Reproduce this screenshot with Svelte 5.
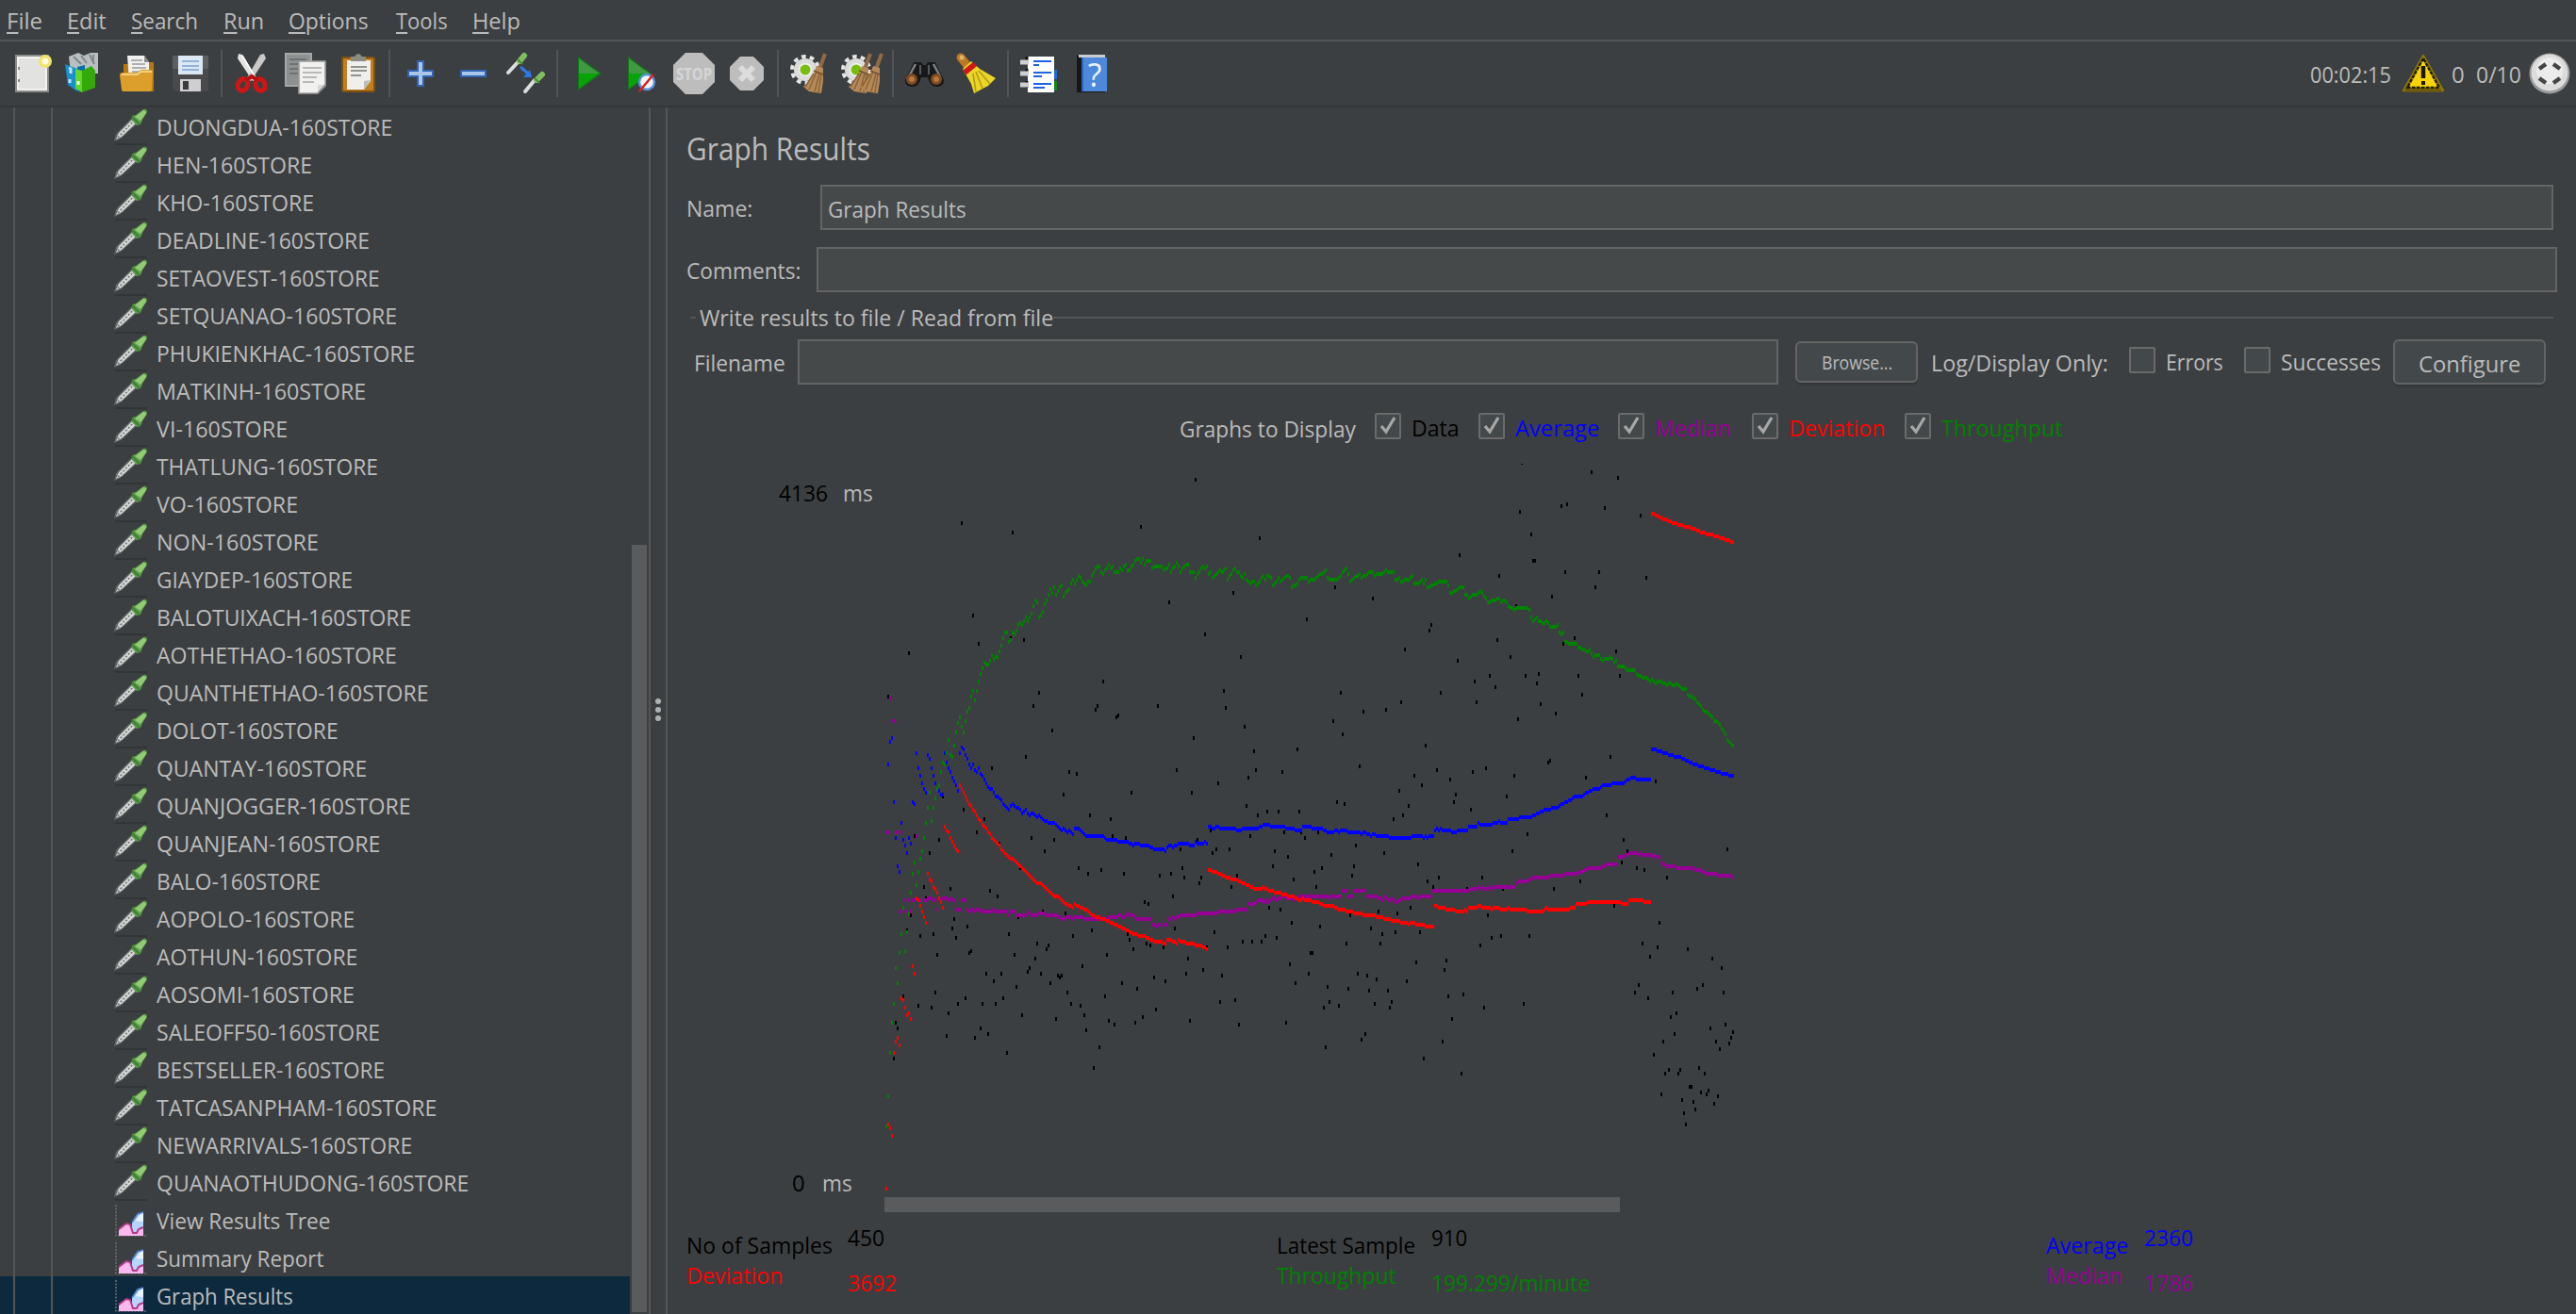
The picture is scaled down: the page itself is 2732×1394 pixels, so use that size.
<script lang="ts">
  // Squeezes a text run horizontally so that it takes exactly `width` pixels.
  function fit(node: HTMLElement, width: number) {
    const natural = node.offsetWidth;
    if (!natural) return;
    node.style.transform = `translateX(1px) scaleX(${(width - 1) / natural})`;
    node.style.marginRight = `${width - natural}px`;
  }

  const menus: [string, number][] = [
    ['File', 39], ['Edit', 43], ['Search', 72], ['Run', 44], ['Options', 86], ['Tools', 56], ['Help', 52],
  ];

  const toolbar = [
    'new', 'templates', 'open', 'save', '|', 'cut', 'copy', 'paste', '|', 'plus', 'minus', 'toggle', '|',
    'play', 'playnow', 'stop', 'shutdown', '|', 'clear', 'clearall', '|', 'find', 'broom', '|', 'functions', 'help',
  ];

  const samplers: [string, number][] = [
    ['DUONGDUA', 251], ['HEN', 166], ['KHO', 168], ['DEADLINE', 227], ['SETAOVEST', 238], ['SETQUANAO', 256],
    ['PHUKIENKHAC', 275], ['MATKINH', 223], ['VI', 140], ['THATLUNG', 236], ['VO', 151], ['NON', 173],
    ['GIAYDEP', 209], ['BALOTUIXACH', 271], ['AOTHETHAO', 256], ['QUANTHETHAO', 290], ['DOLOT', 194],
    ['QUANTAY', 224], ['QUANJOGGER', 271], ['QUANJEAN', 239], ['BALO', 175], ['AOPOLO', 211], ['AOTHUN', 214],
    ['AOSOMI', 211], ['SALEOFF50', 238], ['BESTSELLER', 243], ['TATCASANPHAM', 298], ['NEWARRIVALS', 272],
    ['QUANAOTHUDONG', 332],
  ];
  const listeners: [string, number][] = [['View Results Tree', 185], ['Summary Report', 179], ['Graph Results', 146]];

  const graphs: [string, number, string, number][] = [
    ['Data', 52, 'k', 110], ['Average', 90, 'b', 148], ['Median', 82, 'm', 142],
    ['Deviation', 103, 'r', 162], ['Throughput', 130, 'g', 170],
  ];

  const stats = [
    { id: 'a', labels: [['No of Samples', 156, 'k'], ['Deviation', 103, 'r']], values: [['450', 40, 'k'], ['3692', 53, 'r']] },
    { id: 'b', labels: [['Latest Sample', 148, 'k'], ['Throughput', 128, 'g']], values: [['910', 39, 'k'], ['199.299/minute', 169, 'g']] },
    { id: 'c', labels: [['Average', 88, 'b'], ['Median', 82, 'm']], values: [['2360', 53, 'b'], ['1786', 53, 'm']] },
  ] as { id: string; labels: [string, number, string][]; values: [string, number, string][] }[];

  // The plot is recorded in two halves, each with its own origin and resolution.
  type Half = { x: number; y: number; kx: number; ky: number };
  const L: Half = { x: -38, y: -12, kx: 3, ky: 2.119 };
  const R: Half = { x: 402, y: -12, kx: 2.904, ky: 2.119 };

  const parse = (s: string, h: Half) =>
    s.trim().split(/\s+/).map((p) => {
      const [x, y] = p.split(',').map(Number);
      return [2 * Math.round((h.x + x / h.kx) / 2), h.y + y / h.ky];
    });
  const mark = (x: number, y: number) => `M${x - 1} ${2 * Math.round((y - 1) / 2) - 1}h2v4h-2z`;
  const dots = (s: string, h: Half) => parse(s, h).map(([x, y]) => mark(x, y)).join('');
  const line = (s: string, h: Half) =>
    s.split('|').map((part) => {
      const p = parse(part, h);
      let d = mark(p[0][0], p[0][1]);
      for (let i = 1; i < p.length; i++) {
        const [x0, y0] = p[i - 1];
        const [x1, y1] = p[i];
        for (let x = x0 + 2; x <= x1; x += 2) d += mark(x, y0 + ((y1 - y0) * (x - x0)) / (x1 - x0));
      }
      return d;
    }).join('');

  const data =
    dots('1104,61 360,159 522,180 930,167 1308,193 1224,315 1020,337 396,366 414,430 558,421 1134,409 1248,460 192,451 516,416 810,515 1194,536 606,540 588,570 786,578 792,570 984,570 1200,574 126,549 852,595 858,591 1260,616 648,625 1098,642 1290,671 564,684 456,710 702,718 726,722 1044,714 1296,714 1272,731 1176,744 900,765 1092,765 684,769 300,775 1266,794 366,803 768,816 834,824 1302,816 432,824 408,854 210,862 582,866 654,871 840,862 882,866 1110,871 288,871 1152,850 1278,862 258,900 624,896 1056,892 1158,900 1170,892 1212,892 546,935 732,934 762,947 804,938 876,947 990,951 1026,947 1062,934 1068,955 1122,955 1116,968 1236,951 1218,977 240,977 324,981 450,985 474,998 1032,998 942,1010 954,1015 246,1002 690,1036 618,1034 198,1040 336,1049 540,1045 330,1070 378,1066 774,1074 888,1083 1038,1070 1164,1078 228,1087 270,1083 342,1091 510,1083 714,1087 894,1095 948,1104 960,1108 906,1117 1002,1112 600,1104 636,1108 630,1117 1206,1112 1254,1100 1284,1100 1314,1100 186,1074 390,1121 384,1125 282,1129 528,1129 822,1129 594,1138 1080,1138 744,1155 576,1159 570,1167 1128,1163 438,1172 486,1172 612,1172 1074,1172 666,1176 672,1180 678,1176 972,1180 1188,1176 462,1189 642,1193 870,1193 1008,1189 534,1201 918,1205 276,1214 696,1214 174,1222 372,1227 492,1227 816,1222 1230,1231 1182,1235 426,1239 348,1239 468,1239 708,1239 738,1244 222,1244 264,1248 978,1252 318,1261 552,1265 750,1265 936,1269 660,1273 828,1277 1086,1277 150,1282 912,1282 846,1286 1242,1286 156,1294 420,1294 756,1299 312,1311 444,1307 402,1316 798,1337 504,1350 144,1362 780,1383 480,881 1140,1111', L) +
    dots('796,24 1010,44 1092,57 917,121 935,116 1051,125 790,133 1161,142 825,184 604,231 831,243 836,243 726,277 929,269 1034,269 1179,282 221,303 1022,303 337,328 888,324 778,345 133,375 517,388 511,400 720,421 958,417 923,430 435,443 1086,447 598,468 761,460 697,502 807,502 848,498 970,502 1098,502 650,515 842,519 714,527 238,540 546,540 981,545 424,561 656,561 854,566 308,582 377,578 900,587 784,599 215,604 244,633 104,667 500,659 1069,684 883,693 877,697 58,718 296,705 534,714 645,718 685,710 464,727 772,727 993,731 575,735 1208,739 488,748 418,760 1016,756 592,769 749,773 226,786 587,786 250,790 447,794 639,803 12,807 46,807 110,807 430,816 1057,816 401,824 64,854 168,854 116,852 128,866 813,858 1109,871 285,883 35,896 767,896 1121,896 1429,892 372,900 75,909 209,905 1103,921 29,930 279,930 476,926 1150,934 1173,938 180,934 157,943 273,951 540,955 674,955 1243,955 93,960 505,964 976,964 163,977 523,977 627,979 894,981 737,981 17,1023 52,1027 453,1023 354,1032 412,1036 1080,1019 267,1040 691,1040 87,1057 1219,1057 174,1066 331,1070 406,1078 482,1078 366,1083 6,1087 41,1091 703,1091 732,1087 819,1087 255,1104 360,1104 668,1108 1167,1104 1214,1112 1307,1116 145,1125 151,1125 1190,1133 563,1142 1382,1138 470,1146 81,1150 558,1163 1411,1159 139,1172 290,1172 319,1176 349,1184 441,1188 99,1193 1156,1197 1353,1197 197,1201 261,1205 1336,1205 325,1210 383,1210 1144,1214 1260,1214 1417,1214 615,1218 569,1222 1185,1227 203,1235 395,1235 343,1239 801,1239 232,1244 186,1248 389,1248 679,1248 1272,1261 1254,1269 581,1273 70,1282 1423,1286 1376,1294 1446,1303 314,1307 1266,1307 1440,1316 302,1320 552,1324 1231,1324 1394,1324 1434,1328 192,1337 1405,1341 1202,1354 494,1362 1342,1383 1248,1388 1283,1388 1237,1396 1278,1396 1359,1396 610,1396 1312,1426 1318,1426 1370,1434 1347,1439 1225,1443 1365,1443 1399,1447 1289,1455 1324,1460 1388,1464 1330,1477 1295,1485 1301,1511', R);

  const average =
    dots('132,650 138,642 126,701 144,786 168,832 150,866 192,866 174,871 180,883 198,879 186,900 156,930 162,943 204,786 210,790 216,676 222,710 228,727 234,744 240,756 246,765 252,680 258,688 264,710 270,727 276,744 288,760 294,769 300,769 306,676 312,697 318,710 324,718 330,731 336,739 342,748 348,760', L) +
    line('354,676 360,663 366,667 372,680 378,688 384,701 390,710 396,701 402,714 408,718 414,710 420,722 432,735 444,752 456,757 468,773 480,777 492,790 510,803 522,790 534,798 546,803 552,811 564,803 576,816 588,811 600,820 606,816 618,824 636,832 654,832 666,841 678,850 684,845 696,854 702,850 714,858 720,845 732,845 744,854 756,862 792,864 810,862 822,871 888,875 906,883 912,879 936,883 966,887 972,892 996,892 1008,896 1014,887 1026,883 1032,887 1050,879 1098,883 1104,877 1116,879 1128,879 1134,875 1140,880|1146,841 1164,845 1176,841 1182,846 1242,848 1302,845 1314,841 1322,836 1332,837', L) +
    line('0,837 18,837 24,841 66,842 72,846 95,846 98,850 117,850 122,841 145,841 150,846 180,846 198,854 215,854 221,849 232,854 238,849 256,849 261,854 297,854 302,858 308,853 325,858 332,863 337,858 348,862 383,862 389,867 453,867 459,862 490,862 494,867 498,862 504,867 510,862 523,862|529,850 534,845 540,850 546,846 552,850 575,850 581,854 592,854 598,850 627,850 633,841 656,841 662,832 668,837 703,837 709,832 720,832 726,827 732,832 749,832 755,824 785,824 790,820 825,820 848,811 865,803 883,803 889,799 906,799 918,790 935,786 955,777 965,773 982,773 1005,760 1034,756 1045,748 1069,748 1074,744 1109,744 1115,739 1138,731 1150,735 1161,735 1190,735|1196,667 1208,667 1214,671 1225,671 1231,676 1243,676 1250,680 1262,680 1266,684 1278,684 1300,693 1330,701 1350,706 1390,715 1410,722 1428,722 1434,727 1446,727', R);

  const deviation =
    dots('120,1657 126,1511 132,1519 138,1535 144,1350 150,1324 156,1316 162,1333 168,1227 174,1231 180,1248 186,1265 192,1261 198,1273 204,1155 210,1171 216,1002 222,1006 228,1019 234,1032 240,1044 246,1057 252,947 258,960 264,964 270,977 276,981 282,990 288,1002 294,1010 300,1023 306,841 312,850 318,854 324,866 330,875 336,883 342,892 348,897', L) +
    line('354,748 366,765 384,790 402,807 414,824 432,841 456,866 474,879 492,896 516,913 528,917 564,943 600,968 612,970 648,994 672,1002 690,1015 714,1023 720,1015 760,1030 774,1040 816,1051 846,1061 876,1071 906,1083 942,1087 972,1099 1008,1103 1014,1095 1026,1096 1044,1104 1050,1096 1062,1100 1086,1104 1110,1107 1134,1112 1140,1117|1146,938 1164,943 1200,955 1242,963 1296,981 1314,981 1320,977 1326,979', L) +
    line('0,977 6,981 32,988 100,1001 116,1007 122,1001 128,1005 160,1011 190,1019 212,1020 240,1028 300,1038 340,1042 400,1053 440,1057 450,1061 461,1057 470,1061 495,1062 500,1066 523,1066|529,1019 540,1023 558,1023 563,1027 587,1027 592,1032 615,1032 621,1027 627,1032 633,1023 656,1023 665,1019 674,1023 697,1023 703,1028 708,1023 726,1023 732,1028 749,1028 755,1023 761,1028 808,1028 813,1032 859,1032 871,1023 877,1027 941,1027 947,1023 958,1023 964,1015 993,1015 999,1010 1100,1010 1104,1015 1121,1015 1127,1006 1167,1006 1173,1010 1190,1010|1196,137 1208,142 1231,150 1254,155 1278,163 1300,167 1325,172 1350,178 1370,184 1395,188 1405,193 1418,193 1422,197 1434,197 1440,201 1446,201', R);

  const median =
    dots('132,553 138,604 144,604 120,853 126,853 150,853 156,853 168,853 216,862 162,1031 174,1031 186,1031 198,1031 180,1006 192,1006 204,1006 210,1006 216,1004 228,1006 240,1006 246,1006 252,1001 258,1001 264,1001 270,1006 276,1006 288,1001 282,1027 294,1006 300,1001 306,1001 312,1001 318,1006 324,1001 330,1006 336,1006 342,1027 348,1027 354,1027 360,1006 366,1006 372,1006', L) +
    line('378,1027 384,1032 390,1027 402,1031 420,1027 426,1032 444,1031 456,1029 474,1032 504,1031 510,1040 516,1031 528,1031 534,1040 564,1040 570,1034 582,1042 594,1040 612,1036 634,1040 660,1042 678,1049 690,1045 700,1045 714,1047 732,1043 756,1049 792,1048 846,1046 858,1041 876,1044 888,1038 906,1042 918,1049 960,1049|966,1061 978,1065 990,1061|1002,1061 1014,1061|1020,1049 1032,1045 1038,1049 1056,1040 1086,1042 1116,1036 1170,1035 1182,1030 1194,1034 1230,1030 1266,1027|1272,1015 1290,1013 1302,1006 1314,1006 1320,1010', L) +
    line('0,1006 6,1010 12,1006 18,1010 30,1002 38,1006 50,1002 58,998 70,1002 85,1002 95,1006 110,998 197,998 203,1002 209,998 240,998|244,985 255,985|261,998 273,998|279,985 314,985|320,998 350,998 366,1006 372,998 384,1006 395,1004 412,1012 420,1006 440,1001 455,1001 464,998 475,1001 490,998 504,1000 517,997|523,985 633,985 639,981 656,981 662,976 668,981 674,977 680,981 690,977 697,981 710,977 772,977 778,968 790,964 808,964 825,960 836,955 877,955 883,951 923,951 929,947 958,947 976,943 999,935 1039,934 1045,930 1062,926 1086,925|1092,909 1109,909 1127,900 1150,900 1156,905 1161,900 1167,905 1190,905 1196,910 1202,904 1208,910 1218,910|1225,921 1243,930 1268,930 1272,934 1325,934 1330,938 1345,938 1360,945 1395,948 1400,951 1440,951 1446,955', R);

  const throughput =
    dots('120,1515', L) +
    line('126,1447 132,1350 138,1282 144,1239 150,1159 156,1193 162,1125 168,1083 174,1023 180,1121 186,1078 192,1036 198,989 204,947 210,921 216,972 222,943 228,913 234,896 240,866 246,832 252,799 258,765 264,828 270,799 276,777 282,756 288,748 294,718 300,697 306,701 312,676 318,646 324,680 330,684 336,659 342,629 348,608 354,595 360,616 366,629 372,604 378,582 384,574 390,549 396,536 402,557 408,536 414,515 420,498 426,485 432,472 438,477 444,477 450,468 456,456 462,464 468,460 474,460 480,447 486,434 492,417 498,404 504,404 510,426 516,421 522,404 528,409 534,400 540,387 546,383 552,387 558,379 564,371 570,379 576,371 582,362 588,345 594,333 600,337 606,371 612,367 618,358 624,341 630,333 636,320 642,307 648,315 654,303 660,320 666,311 672,303 678,299 684,324 690,315 702,307 708,294 714,286 720,294 726,286 732,277 744,290 756,299 762,290 768,290 780,269 792,256 798,256 804,269 810,273 822,260 828,252 834,260 840,256 846,269 858,269 864,260 870,265 882,252 888,265 894,265 906,252 918,239 924,239 930,248 936,239 942,252 948,243 960,243 966,260 972,256 996,256 1002,265 1014,260 1020,252 1026,269 1038,256 1044,248 1056,269 1068,256 1080,252 1086,269 1098,269 1104,282 1110,273 1128,256 1134,260 1140,256 1146,273 1152,269 1158,282 1182,265 1188,269 1200,260 1206,286 1218,273 1230,260 1236,269 1242,269 1254,282 1260,273 1266,286 1278,294 1290,290 1296,299 1308,290 1320,277', L) +
    line('0,277 6,286 12,277 18,277 24,282 29,299 41,290 46,282 52,290 70,277 81,282 87,303 104,294 116,282 133,282 139,290 163,282 192,265 198,282 209,286 226,286 238,277 244,269 256,260 261,273 267,290 279,282 296,273 302,282 325,269 337,269 343,277 350,273 366,273 377,265 384,269 400,270 406,286 418,282 424,290 447,286 459,277 464,294 476,294 488,286 493,294 499,286 505,303 516,300 546,290 563,290 569,299 575,316 592,311 604,303 615,303 621,320 627,320 633,328 645,320 656,320 668,311 680,324 691,337 714,332 726,328 732,337 743,332 755,345 772,354 784,349 807,349 819,354 825,371 831,379 842,371 848,379 865,383 871,379 883,392 900,392 906,387 912,405 918,409 923,405 929,426 941,430 964,430 970,438 987,443 999,447 1005,443 1016,460 1022,456 1034,456 1045,468 1051,464 1063,464 1068,460 1080,472 1086,468 1092,481 1109,481 1121,489 1144,489 1150,498 1167,506 1179,506 1190,515 1196,510 1208,519 1220,515 1231,519 1243,523 1249,519 1266,523 1272,519 1284,527 1290,532 1301,532 1307,545 1330,554 1342,566 1359,582 1370,586 1388,603 1405,612 1411,621 1423,633 1429,646 1446,659', R);
</script>

{#snippet pen()}
  <path d="M2 39h34" stroke="#2f3233" stroke-width="2" opacity=".7" />
  <path d="M1 36l2-8L21 10l6 6L8 33z" fill="#63676a" />
  <path d="M3 34l3-7L22 11l4 4L9 31z" fill="#d6d8d6" />
  <path d="M5 32L23 13" stroke="#707472" stroke-width="1.6" stroke-dasharray="2 2" />
  <path d="M20 9l4-1 8-6q4-1 4 3l-5 8-2 5-4 1-5-5z" fill="#5c9c48" />
  <path d="M23 10l9-7q3 0 3 3l-6 8z" fill="#93cb74" />
  <path d="M20 10l8 8" stroke="#3f7d3d" stroke-width="2" />
{/snippet}

{#snippet chart()}
  <path d="M3 1v33h32" fill="none" stroke="#6a6c70" stroke-width="1.6" stroke-dasharray="2 1.5" />
  <path d="M20 31V20l6-8 6-3v25H20z" fill="#b5d5fb" />
  <path d="M24 18l4-6 4-3v10z" fill="#e9f3ff" />
  <path d="M20 20l6-9 6-2" fill="none" stroke="#5487d6" stroke-width="1.6" />
  <path d="M6 34v-6l8-7 4 1 6 11 3-4 5-3v8z" fill="#fbb8ee" />
  <path d="M6 27l8-6 4 1 3 9h4l2-4 5-2" fill="none" stroke="#b53a86" stroke-width="2" />
{/snippet}

{#snippet check(on: boolean)}
  <svg class="cb" width="28" height="28" viewBox="0 0 28 28">
    <rect x="1" y="1" width="26" height="26" rx="1.5" fill="#43494a" stroke="#6b6b6b" stroke-width="2" />
    {#if on}<path d="M7 14l5 6L21 5" fill="none" stroke="#a7a7a7" stroke-width="3.2" />{/if}
  </svg>
{/snippet}

{#snippet gear()}
  <circle cx="16" cy="18" r="14" fill="none" stroke="#e6e6e6" stroke-width="4" stroke-dasharray="4.6 4.2" />
  <circle cx="16" cy="18" r="12" fill="#dcdcdc" />
  <circle cx="16" cy="18" r="7" fill="#f4f4f4" />
  <circle cx="16" cy="18" r="5.5" fill="#79bd12" />
{/snippet}

{#snippet brush(dx: number)}
  <g transform="translate({dx} 0)">
    <path d="M35 1L28 20" stroke="#8f6a44" stroke-width="4" />
    <path d="M26 14l7 2 0 14-2 13-7-1-6-1-6-5q9-7 14-22z" fill="#b58a58" />
    <path d="M26 20l-8 19M29 22l-5 19M31 23l-3 19M23 22L14 36" stroke="#8a6237" stroke-width="1.4" />
    <path d="M23 19l10 4" stroke="#775330" stroke-width="1.6" />
  </g>
{/snippet}

{#snippet icon(name: string)}
  <svg width="44" height="44" viewBox="0 0 44 44">
    {#if name === 'new'}
      <rect x="5" y="3" width="34" height="38" fill="#f2f2f0" stroke="#8b8b88" stroke-width="2" />
      <rect x="8" y="6" width="28" height="32" fill="#e2e2e0" />
      <path d="M8 15v3M8 28v3" stroke="#888" stroke-width="2" />
      <circle cx="36" cy="9" r="7" fill="#f2e36b" /><circle cx="36" cy="9" r="3.5" fill="#fffce0" />
    {:else if name === 'templates'}
      <path d="M5 4l10-4 6 3 7-3h8v22H7z" fill="#b8bfc1" />
      <path d="M10 4l8 8M18 3l6 8M27 2l5 10M31 2v9" stroke="#7e888b" stroke-width="2" />
      <path d="M1 12l13 5v24L4 34z" fill="#178fd0" /><path d="M14 15l8-2v24l-6 5-2-2z" fill="#0b6ca8" />
      <path d="M5 16l2 1v5M6 28v4" stroke="#bfe6fa" stroke-width="3" />
      <path d="M12 17l7 2v23l-7-4z" fill="#63d62a" /><path d="M19 19l10-5 4 5v18l-14 5z" fill="#35a80c" />
      <path d="M15 30v4" stroke="#e6ffd9" stroke-width="3" />
    {:else if name === 'open'}
      <g transform="translate(3 0)">
        <path d="M4 12h7v-2h25v31H4z" fill="#b8780b" />
        <path d="M8 3h18l5 7v20H10z" fill="#f1f1f1" /><path d="M26 3v7h5z" fill="#8d8d8d" />
        <path d="M12 8h12M13 12h14M13 16h15M13 20h12" stroke="#9b9b9b" stroke-width="1.6" />
        <path d="M0 24q0-3 3-3h16l3-3h13l-1 21q0 2-3 2H4q-2 0-2-2z" fill="#dc9f2c" />
        <path d="M2 23h17l3-3h12" fill="none" stroke="#f4cf7e" stroke-width="2" />
      </g>
    {:else if name === 'save'}
      <g transform="translate(2 0)">
        <path d="M1 3h38v38H5l-4-4z" fill="#4a4a4c" /><path d="M1 3h38v14H1z" fill="#6c6c70" opacity=".6" />
        <rect x="7" y="3" width="26" height="20" fill="#dbe9f6" />
        <path d="M11 9h18M11 14h18M11 18h18" stroke="#93b2d4" stroke-width="2" />
        <rect x="9" y="28" width="22" height="13" fill="#cfcfd1" /><rect x="12" y="30" width="6" height="9" fill="#3b3b3d" />
      </g>
    {:else if name === 'cut'}
      <g transform="translate(1 0)">
        <path d="M6 1l4 1 16 26-5 2L5 6z" fill="#e4e4e2" /><path d="M33 1l-4 1-15 26 5 2L35 6z" fill="#c9c9c7" />
        <path d="M10 3l14 24" stroke="#fff" stroke-width="1.6" />
        <ellipse cx="10.5" cy="34" rx="5" ry="6.5" fill="none" stroke="#d11414" stroke-width="5" transform="rotate(22 10.5 34)" />
        <ellipse cx="29" cy="34" rx="5" ry="6.5" fill="none" stroke="#d11414" stroke-width="5" transform="rotate(-22 29 34)" />
        <path d="M14 29l6-4 6 4" fill="none" stroke="#b50f0f" stroke-width="4" />
      </g>
    {:else if name === 'copy'}
      <rect x="1" y="1" width="27" height="34" fill="#8e9191" stroke="#a5a7a7" stroke-width="2" />
      <path d="M5 7h18M5 12h9M5 17h9M5 22h9" stroke="#6f7272" stroke-width="2" />
      <path d="M15 9h28v26l-8 8H15z" fill="#f1f1ef" stroke="#9c9c9a" stroke-width="1.6" />
      <path d="M19 16h20M19 21h20M19 26h15M19 31h12" stroke="#b9b9b7" stroke-width="2" />
      <path d="M43 34h-8v9z" fill="#777" /><path d="M42 34l-7 8v-8z" fill="#d8d8d6" />
    {:else if name === 'paste'}
      <rect x="5" y="5" width="34" height="36" rx="1" fill="#c07f20" stroke="#7d5110" stroke-width="2" />
      <path d="M10 8h25v22l-7 9H10z" fill="#efefed" />
      <path d="M14 15h17M14 19h17M14 24h11" stroke="#92928f" stroke-width="2" />
      <path d="M35 29l-7 10v-9z" fill="#bdbdb9" />
      <path d="M14 9V4h4q4-6 8 0h4v5z" fill="#8b8b80" />
    {:else if name === 'plus'}
      <path d="M19 9h6v10h10v6H25v10h-6V25H9v-6h10z" fill="#a9c5e8" stroke="#2f64b4" stroke-width="2" />
    {:else if name === 'minus'}
      <rect x="9" y="19" width="26" height="6" fill="#a9c5e8" stroke="#2f64b4" stroke-width="2" />
    {:else if name === 'toggle'}
      <path d="M3 21L14 9" stroke="#dcdedc" stroke-width="4" stroke-linecap="round" />
      <path d="M15 9L20 3" stroke="#7fbf62" stroke-width="6" stroke-linecap="round" /><path d="M13 7l5 5" stroke="#4d8a40" stroke-width="2" />
      <path d="M21 41L31 29" stroke="#dcdedc" stroke-width="4" stroke-linecap="round" />
      <path d="M33 29l6-6" stroke="#7fbf62" stroke-width="6" stroke-linecap="round" /><path d="M31 27l5 5" stroke="#4d8a40" stroke-width="2" />
      <path d="M16 15l8 7" stroke="#2f7de4" stroke-width="3" /><path d="M28 26h-9l7-8z" fill="#2a78ea" />
    {:else if name === 'play' || name === 'playnow'}
      <path d={name === 'play' ? 'M11 4l25 18-25 18z' : 'M8 4l25 18L8 40z'} fill="#14761a" />
      <path d={name === 'play' ? 'M12 6l12 9 10 7H12z' : 'M9 6l12 9 10 7H9z'} fill="#3f9942" />
      <path d={name === 'play' ? 'M12 22h21L12 38z' : 'M9 22h21L9 38z'} fill="#07a307" />
      {#if name === 'playnow'}
        <circle cx="28" cy="31" r="8" fill="#f2f6fb" stroke="#5593dc" stroke-width="2.4" /><path d="M20 41L35 23" stroke="#e02020" stroke-width="2.6" />
      {/if}
    {:else if name === 'stop'}
      <path d="M13 0h18l13 13v18L31 44H13L0 31V13z" fill="#bdbdbd" />
      <text x="22" y="29" text-anchor="middle" class="stop" textLength="38" lengthAdjust="spacingAndGlyphs">STOP</text>
    {:else if name === 'shutdown'}
      <path d="M15 4h14l11 11v14L29 40H15L4 29V15z" fill="#bdbdbd" />
      <path d="M15 15l14 14M29 15L15 29" stroke="#dcdcdc" stroke-width="6" />
    {:else if name === 'clear'}
      <g transform="translate(2 0)">{@render gear()}{@render brush(2)}</g>
    {:else if name === 'clearall'}
      {@render gear()}{@render brush(-4)}{@render brush(8)}
    {:else if name === 'find'}
      <path d="M11 10h8l2 3h3l2-3h8l9 19q0 7-7 7-8 0-10-10h-7q-2 10-10 10-7 0-7-7z" fill="#17181a" />
      <path d="M13 12L6 25M32 12l7 13" stroke="#7c7f83" stroke-width="2.6" /><path d="M18 13v10M27 13v10" stroke="#55585b" stroke-width="2" />
      <circle cx="9" cy="28" r="6" fill="#7d4a22" /><circle cx="9" cy="28" r="3" fill="#b9773f" />
      <circle cx="35" cy="28" r="6" fill="#7d4a22" /><circle cx="35" cy="28" r="3" fill="#b9773f" />
    {:else if name === 'broom'}
      <path d="M5 5l9 11" stroke="#b97a26" stroke-width="9" stroke-linecap="round" />
      <circle cx="6" cy="5" r="2.5" fill="#e5b469" />
      <path d="M7 17l9-8 9 8 17 10-8 8-15 8-3-10z" fill="#ecd52a" />
      <path d="M18 22l3 19M21 20l7 18M24 19l12 14" stroke="#b39a0e" stroke-width="1.6" />
      <path d="M9 21l11-9" stroke="#d01818" stroke-width="6" />
    {:else if name === 'functions'}
      <path d="M34 18h7v10h-7z" fill="#2468d8" /><path d="M34 30h7v10h-7z" fill="#19841b" />
      <rect x="10" y="4" width="28" height="38" fill="#fff" /><path d="M9 4v38" stroke="#111" stroke-width="3" stroke-dasharray="7 6" />
      <path d="M2 10h9M2 22h9M2 34h9" stroke="#cfcfcf" stroke-width="5" />
      <path d="M16 9h19M16 13h6M16 21h19M16 25h9M16 33h19M16 37h12" stroke="#1c62e6" stroke-width="2" />
    {:else if name === 'help'}
      <path d="M6 3h30v39H6z" fill="#161616" /><path d="M8 2h28v3H8z" fill="#c9ccd1" />
      <rect x="11" y="5" width="27" height="36" fill="#4d88da" /><path d="M12 5v36" stroke="#2a66c0" stroke-width="2" />
      <text x="25" y="36" text-anchor="middle" class="q">?</text>
    {/if}
  </svg>
{/snippet}

<div class="app">
  <nav class="menu">
    {#each menus as [label, w]}
      <span><span class="t" use:fit={w}><u>{label[0]}</u>{label.slice(1)}</span></span>
    {/each}
  </nav>

  <header class="toolbar">
    {#each toolbar as name}
      {#if name === '|'}<i class="sep"></i>{:else}{@render icon(name)}{/if}
    {/each}
    <div class="status">
      <span class="time"><span class="t" use:fit={87}>00:02:15</span></span>
      <svg class="warn" width="44" height="42" viewBox="0 0 44 42">
        <path d="M22 2L1 39h42z" fill="#9a8209" stroke="#8b7508" stroke-width="2.5" stroke-linejoin="round" />
        <path d="M22 5L5 36h34z" fill="#f7d308" stroke="#1f1c08" stroke-width="2.4" stroke-dasharray="4 1" />
        <path d="M22 13v13" stroke="#1c1908" stroke-width="4.5" /><path d="M20 29h4v4h-4z" fill="#1c1908" />
        <path d="M3 39h38" stroke="#6d5b0a" stroke-width="3" />
      </svg>
      <span class="errs"><span class="t" use:fit={15}>0</span></span>
      <span class="threads"><span class="t" use:fit={49}>0/10</span></span>
      <svg width="44" height="44" viewBox="0 0 44 44">
        <circle cx="22" cy="22" r="21.5" fill="#9b9b9b" /><circle cx="22" cy="21" r="19.5" fill="#dcdcdc" /><circle cx="22" cy="19" r="14" fill="#ececec" />
        <path d="M11 17l7-5M26 12l7 5M11 27l7 5M26 32l7-5" stroke="#454545" stroke-width="4.4" />
      </svg>
    </div>
  </header>

  <div class="body">
    <aside class="tree">
      <div class="rows">
        {#each samplers as [label, w]}
          <div class="row"><svg width="40" height="40" viewBox="0 0 40 40">{@render pen()}</svg><span class="t" use:fit={w}>{label}-160STORE</span></div>
        {/each}
        {#each listeners as [label, w], i}
          <div class="row" class:selected={i === 2}><svg width="40" height="40" viewBox="0 -3 40 40">{@render chart()}</svg><span class="t" use:fit={w}>{label}</span></div>
        {/each}
      </div>
      <div class="track"><div class="thumb"></div></div>
    </aside>

    <div class="splitter"><i></i><i></i><i></i></div>

    <main>
      <h1><span class="t" use:fit={196}>Graph Results</span></h1>
      <div class="field name"><label for="name"><span class="t" use:fit={71}>Name:</span></label><div class="input" id="name"><span class="t" use:fit={148}>Graph Results</span></div></div>
      <div class="field comments"><label for="comments"><span class="t" use:fit={122}>Comments:</span></label><div class="input" id="comments"></div></div>
      <div class="legend"><span class="t" use:fit={376}>Write results to file / Read from file</span></div>

      <div class="file">
        <span class="lbl fn"><span class="t" use:fit={98}>Filename</span></span>
        <div class="input"></div>
        <div class="btn browse"><span class="t" use:fit={76}>Browse...</span></div>
        <span class="lbl log"><span class="t" use:fit={189}>Log/Display Only:</span></span>
        <span class="opt errors">{@render check(false)}<span class="t" use:fit={62}>Errors</span></span>
        <span class="opt succ">{@render check(false)}<span class="t" use:fit={107}>Successes</span></span>
        <div class="btn conf"><span class="t" use:fit={109}>Configure</span></div>
      </div>

      <div class="graphs">
        <span class="gtd"><span class="t" use:fit={188}>Graphs to Display</span></span>
        {#each graphs as [label, w, c, cell]}
          <span class="opt" style:width="{cell}px">{@render check(true)}<span class="t {c}" use:fit={w}>{label}</span></span>
        {/each}
      </div>

      <div class="plot">
        <div class="axis">
          <div class="top"><span class="max k"><span class="t" use:fit={53}>4136</span></span><span class="t" use:fit={33}>ms</span></div>
          <div class="bottom"><span class="min k"><span class="t" use:fit={15}>0</span></span><span class="t" use:fit={33}>ms</span></div>
        </div>
        <div class="canvas">
          <svg width="1000" height="776" viewBox="0 0 1000 776" shape-rendering="crispEdges">
            <path d={data} fill="#000" />
            <path d={average} fill="#00f" />
            <path d={median} fill="#960096" />
            <path d={deviation} fill="#f00" />
            <path d={throughput} fill="#008200" />
          </svg>
          <div class="hbar"></div>
        </div>
      </div>

      <div class="stats">
        {#each stats as s}
          <div class="stat {s.id}">
            <div class="labels">{#each s.labels as [text, w, c]}<div class={c}><span class="t" use:fit={w}>{text}</span></div>{/each}</div>
            <div class="values">{#each s.values as [text, w, c]}<div class={c}><span class="t" use:fit={w}>{text}</span></div>{/each}</div>
          </div>
        {/each}
      </div>
    </main>
  </div>
</div>

<style>
  :global(body) { background: #3c3f41; }
  .app {
    width: 2732px; height: 1394px; overflow: hidden; display: flex; flex-direction: column;
    background: #3c3f41; color: #bbb; font: 24px 'Open Sans', 'Noto Sans', sans-serif;
  }
  .app * { box-sizing: border-box; }
  svg { display: block; flex: none; }
  .toolbar svg { overflow: visible; }
  .t { display: inline-block; white-space: nowrap; transform-origin: 0 50%; flex: none; }
  .k { color: #000; } .b { color: #00f; } .m { color: #960096; } .r { color: #f00; } .g { color: #008200; }

  .menu {
    height: 44px; border-bottom: 2px solid #555; padding-left: 6px; line-height: 43px; flex: none;
    display: grid; grid-template-columns: 63.5px 68.5px 98px 69px 113.5px 81.5px 80px;
  }
  u { text-decoration-thickness: 2px; text-underline-offset: 3px; }

  .toolbar { height: 70px; border-bottom: 2px solid #333638; display: flex; align-items: center; gap: 12px; padding: 0 6px 0 12px; flex: none; }
  .sep { width: 2px; height: 50px; background: #515455; margin: 0 -2px; }
  .stop { font: bold 17px 'Open Sans', sans-serif; fill: #d6d6d6; }
  .q { font: 34px 'Open Sans', sans-serif; fill: #e8f1ff; }
  .status { display: flex; align-items: center; margin-left: auto; line-height: 48px; }
  .status span { flex: none; }
  .time, .errs, .threads { padding-top: 1px; }
  .time { width: 86px; white-space: nowrap; }
  .warn { margin: 0 7px 0 13px; }
  .errs { width: 26px; }
  .threads { width: 47px; white-space: nowrap; margin-right: 10px; }

  .body { flex: 1; display: flex; min-height: 0; }
  .tree { width: 690px; border-right: 2px solid #555; display: flex; }
  .rows { width: 668px; }
  .row {
    height: 40px; display: flex; align-items: center; padding-left: 120px; gap: 5px; line-height: 42px;
    background: linear-gradient(#555, #555) 14px 0 / 2px 100% no-repeat, linear-gradient(#555, #555) 54px 0 / 2px 100% no-repeat;
  }
  .row .t { padding-top: 1px; }
  .selected { background-color: #0d293e; }
  .track { padding: 464px 2px 2px; width: 20px; display: flex; }
  .thumb { width: 16px; background: #595b5d; }
  .splitter { width: 18px; border-right: 2px solid #555; display: flex; flex-direction: column; align-items: center; gap: 3px; padding-top: 627px; }
  .splitter i { width: 6px; height: 6px; border-radius: 50%; background: #b0b1b2; }

  main { flex: 1; padding-left: 19px; }
  h1 { margin: 0; font-size: 32px; font-weight: 400; height: 82px; line-height: 88px; }
  .field { height: 48px; display: flex; margin-bottom: 18px; line-height: 50px; }
  .field label { flex: none; }
  .input { background: #45494a; border: 2px solid #646464; height: 48px; line-height: 47px; }
  .name label { width: 143px; }
  .name .input { width: 1838px; padding-left: 5px; }
  .comments label { width: 139px; }
  .comments .input { width: 1846px; }
  .legend { display: flex; align-items: center; height: 46px; margin: -14px 24px 0 5px; }
  .legend .t { margin-top: -1px; }
  .legend::before { content: ''; width: 6px; height: 2px; background: #555; margin-right: 3px; }
  .legend::after { content: ''; flex: 1; height: 2px; background: #555; }
  .file { display: flex; height: 48px; align-items: center; padding-left: 8px; }
  .lbl { padding-top: 1px; flex: none; }
  .fn { width: 111px; }
  .file .input { width: 1040px; flex: none; }
  .btn { border: 2px solid #646464; border-radius: 6px; background: #43494a; box-shadow: 0 4px 0 -1px #35383a; display: flex; justify-content: center; align-items: center; flex: none; }
  .browse { width: 130px; height: 44px; margin-left: 18px; font-size: 20px; }
  .log { width: 211px; margin-left: 13px; }
  .conf { width: 162px; height: 48px; padding-top: 2px; }
  .opt { display: flex; align-items: center; gap: 10px; flex: none; }
  .file .cb { margin-top: -4px; }
  .file .opt .t { margin-top: -2px; }
  .errors { width: 122px; }
  .succ { width: 158px; }
  .graphs { display: flex; align-items: center; height: 40px; margin: 24px 0 0 523px; }
  .graphs .opt .t { padding-top: 2px; }
  .gtd { width: 187px; margin-right: 21px; white-space: nowrap; padding-top: 5px; flex: none; }

  .plot { display: flex; height: 817px; padding-top: 20px; }
  .axis { width: 211px; display: flex; flex-direction: column; justify-content: space-between; height: 794px; line-height: 48px; padding: 7px 0; }
  .top, .bottom { display: flex; }
  .top { padding-left: 98px; }
  .bottom { padding-left: 112px; }
  .max { width: 53px; white-space: nowrap; margin-right: 15px; }
  .min { width: 32px; }
  .hbar { width: 780px; height: 16px; margin-top: 2px; background: #595b5d; }

  .stats { display: flex; }
  .stat { display: flex; }
  .labels { padding-top: 16px; line-height: 32px; }
  .values { line-height: 48px; }
  .a { width: 626px; } .a .labels { width: 171px; }
  .b.stat { width: 816px; } .b .labels { width: 164px; }
  .c .labels { width: 104px; }
</style>
